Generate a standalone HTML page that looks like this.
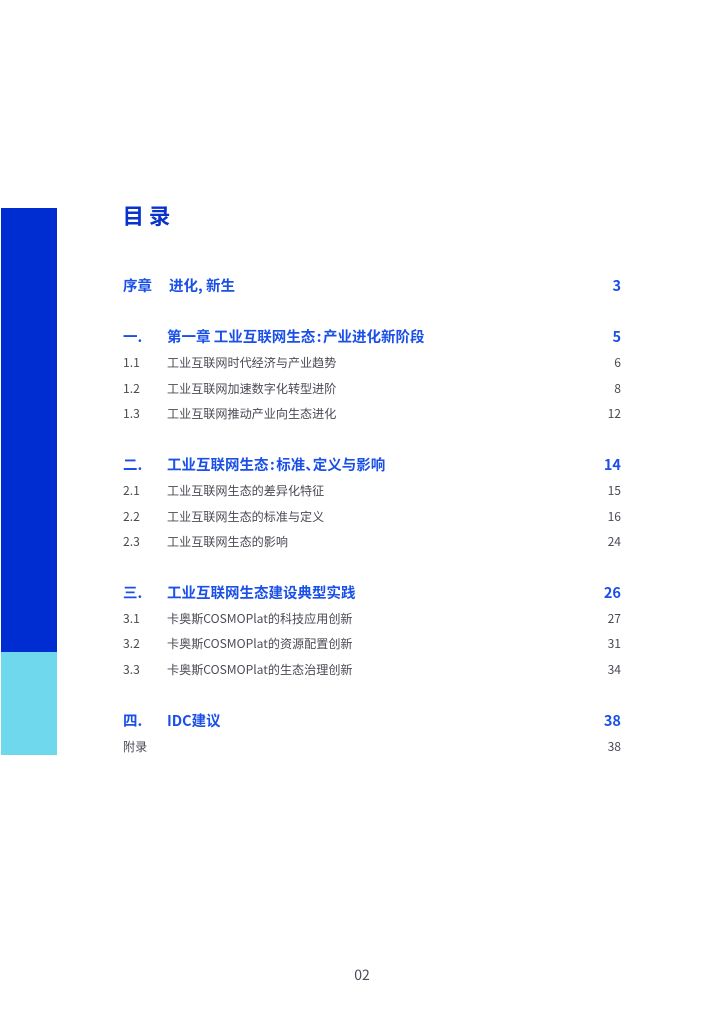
<!DOCTYPE html>
<html lang="zh">
<head>
<meta charset="utf-8">
<style>
html,body{margin:0;padding:0;background:#fff}
body{width:724px;height:1024px;position:relative;overflow:hidden;font-family:"Noto Sans CJK SC","Liberation Sans",sans-serif}
.bar{position:absolute;left:1px;width:56px}
.t{position:absolute;white-space:nowrap;line-height:20px;height:20px}
.h{font-size:14.5px;font-weight:700;color:#1a50e8}
.s{font-size:12.1px;font-weight:400;color:#4a4a55}
.r{right:103px;text-align:right}
.l1{left:123px}
.l2{left:167px}
.c{margin:0 1.5px}
.d{margin-right:-7px}
</style>
</head>
<body>
<div class="bar" style="top:208px;height:444px;background:#002dd2"></div>
<div class="bar" style="top:652px;height:103px;background:#70d8ec"></div>
<div class="t" style="left:122.5px;top:205px;height:22px;line-height:22px;font-size:21.5px;font-weight:700;color:#0a33cc">目 录</div>

<div class="t h l1" style="top:276px">序章</div><div class="t h" style="left:169px;top:276px">进化, 新生</div><div class="t h r" style="top:276px">3</div>

<div class="t h l1" style="top:326.5px">一.</div><div class="t h l2" style="top:326.5px">第一章 工业互联网生态<span class="c">:</span>产业进化新阶段</div><div class="t h r" style="top:326.5px">5</div>
<div class="t s l1" style="top:353px">1.1</div><div class="t s l2" style="top:353px">工业互联网时代经济与产业趋势</div><div class="t s r" style="top:353px">6</div>
<div class="t s l1" style="top:379px">1.2</div><div class="t s l2" style="top:379px">工业互联网加速数字化转型进阶</div><div class="t s r" style="top:379px">8</div>
<div class="t s l1" style="top:404px">1.3</div><div class="t s l2" style="top:404px">工业互联网推动产业向生态进化</div><div class="t s r" style="top:404px">12</div>

<div class="t h l1" style="top:454.5px">二.</div><div class="t h l2" style="top:454.5px">工业互联网生态<span class="c">:</span>标准<span class="d">、</span>定义与影响</div><div class="t h r" style="top:454.5px">14</div>
<div class="t s l1" style="top:481px">2.1</div><div class="t s l2" style="top:481px">工业互联网生态的差异化特征</div><div class="t s r" style="top:481px">15</div>
<div class="t s l1" style="top:507px">2.2</div><div class="t s l2" style="top:507px">工业互联网生态的标准与定义</div><div class="t s r" style="top:507px">16</div>
<div class="t s l1" style="top:532px">2.3</div><div class="t s l2" style="top:532px">工业互联网生态的影响</div><div class="t s r" style="top:532px">24</div>

<div class="t h l1" style="top:582.5px">三.</div><div class="t h l2" style="top:582.5px">工业互联网生态建设典型实践</div><div class="t h r" style="top:582.5px">26</div>
<div class="t s l1" style="top:609px">3.1</div><div class="t s l2" style="top:609px">卡奥斯COSMOPlat的科技应用创新</div><div class="t s r" style="top:609px">27</div>
<div class="t s l1" style="top:634px">3.2</div><div class="t s l2" style="top:634px">卡奥斯COSMOPlat的资源配置创新</div><div class="t s r" style="top:634px">31</div>
<div class="t s l1" style="top:660px">3.3</div><div class="t s l2" style="top:660px">卡奥斯COSMOPlat的生态治理创新</div><div class="t s r" style="top:660px">34</div>

<div class="t h l1" style="top:710.5px">四.</div><div class="t h l2" style="top:710.5px">IDC建议</div><div class="t h r" style="top:710.5px">38</div>
<div class="t s l1" style="top:737px">附录</div><div class="t s r" style="top:737px">38</div>

<div class="t" style="left:0;width:724px;text-align:center;top:965px;font-size:14px;color:#4a4a55">02</div>
</body>
</html>
